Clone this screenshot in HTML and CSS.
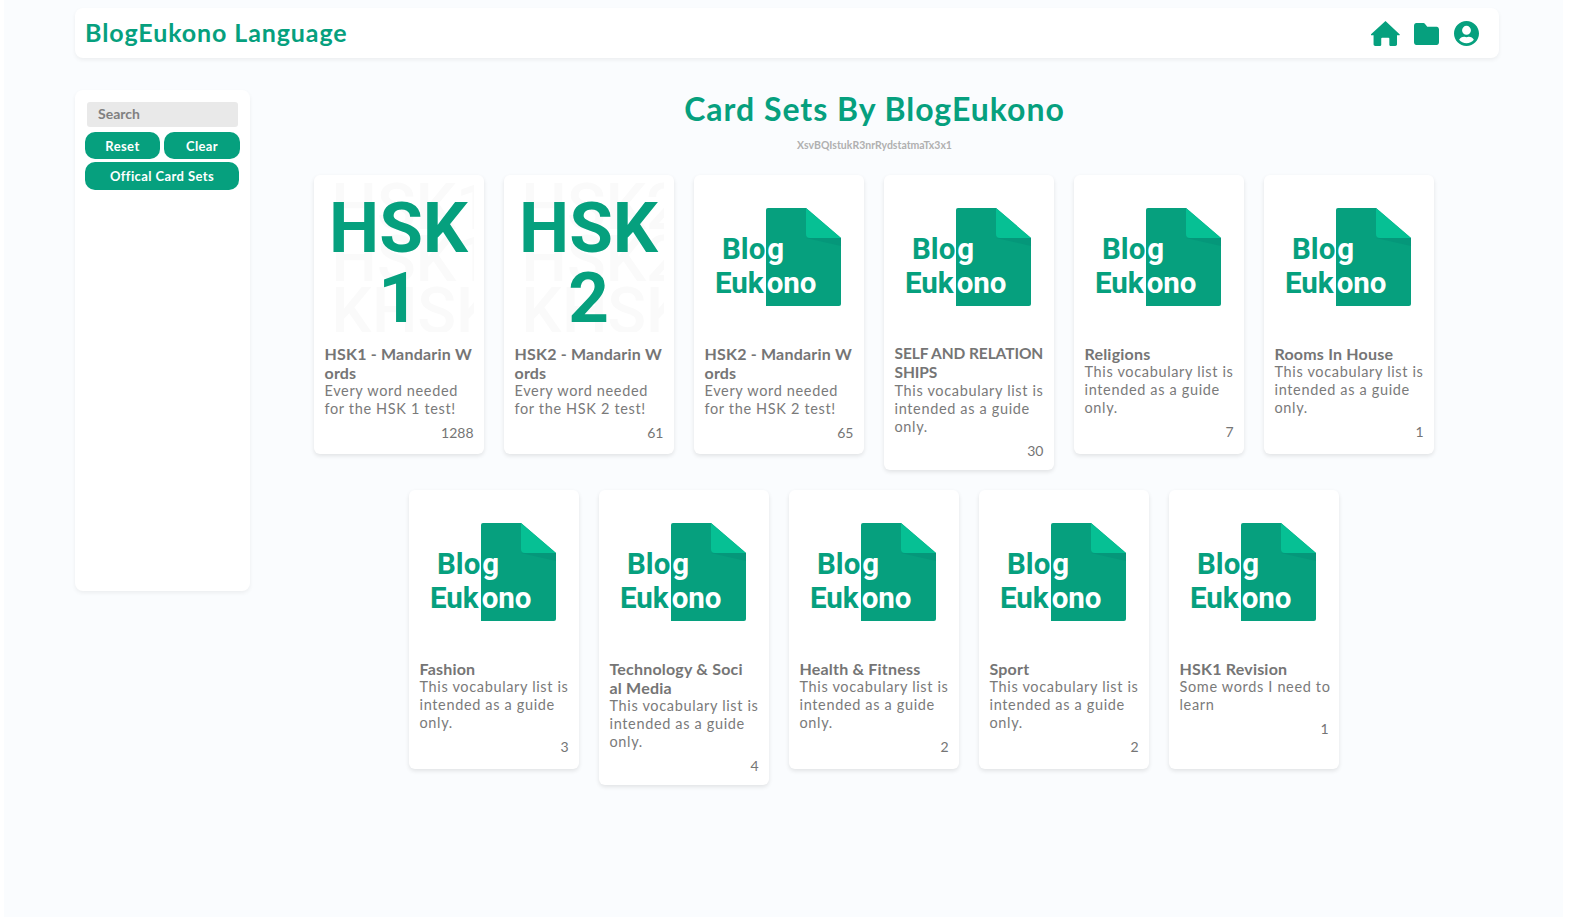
FILE: index.html
```html
<!DOCTYPE html>
<html lang="en">
<head>
<meta charset="utf-8">
<title>BlogEukono Language</title>
<link rel="stylesheet" href="styles.css">
</head>
<body>
<header class="nav">
  <span class="brand">BlogEukono Language</span>
  <div class="nav-icons">
    <svg class="ico ico-home" viewBox="16 32 544 456" preserveAspectRatio="none"><path fill="currentColor" d="M288 32 16 272c-8 8-2 22 9 22h39v162c0 18 14 32 32 32h96c9 0 16-7 16-16V352c0-9 7-16 16-16h120c9 0 16 7 16 16v120c0 9 7 16 16 16h96c18 0 32-14 32-32V294h39c11 0 17-14 9-22z"/></svg>
    <svg class="ico ico-folder" viewBox="0 64 512 384" preserveAspectRatio="none"><path fill="currentColor" d="M464 128H272l-54-54c-6-6-14-10-23-10H48C21 64 0 85 0 112v288c0 27 21 48 48 48h416c27 0 48-21 48-48V176c0-27-21-48-48-48z"/></svg>
    <svg class="ico ico-user" viewBox="0 8 496 496"><path fill="currentColor" fill-rule="evenodd" d="M248 8C111 8 0 119 0 256s111 248 248 248 248-111 248-248S385 8 248 8zm0 96a88 88 0 1 1 0 176 88 88 0 0 1 0-176zm0 344c-59 0-111-27-146-69 19-36 56-59 98-59 2 0 5 0 7 1 13 4 27 7 41 7s28-3 41-7c2-1 5-1 7-1 42 0 79 23 98 59-35 42-87 69-146 69z"/></svg>
  </div>
</header>
<div class="layout">
  <aside class="side">
    <input class="search" placeholder="Search">
    <div class="btn-row">
      <button class="btn btn-reset">Reset</button>
      <button class="btn btn-clear">Clear</button>
    </div>
    <button class="btn btn-wide">Offical Card Sets</button>
  </aside>
  <main class="main">
    <h1 class="title">Card Sets By BlogEukono</h1>
    <p class="sub">XsvBQIstukR3nrRydstatmaTx3x1</p>
    <div class="cards">
      <article class="card">
        <div class="hsk"><div class="hsk-bg">HSK1<br>HSK1<br>KHSK</div><div class="hsk-fg">HSK<br>1</div></div>
        <h2 class="card-title">HSK1 - Mandarin Words</h2>
        <p class="card-desc">Every word needed for the HSK 1 test!</p>
        <div class="count">1288</div>
      </article>
      <article class="card">
        <div class="hsk"><div class="hsk-bg">HSK2<br>HSK2<br>KHSK</div><div class="hsk-fg">HSK<br>2</div></div>
        <h2 class="card-title">HSK2 - Mandarin Words</h2>
        <p class="card-desc">Every word needed for the HSK 2 test!</p>
        <div class="count">61</div>
      </article>
      <article class="card">
        <svg class="thumb" viewBox="0 0 150 150"><path d="M62 28a2 2 0 0 1 2-2h38l35 30v66a2 2 0 0 1-2 2H62z" fill="#06a07e"/><path d="M102 56h35v8z" fill="#05977a"/><path d="M102 26l35 30h-31a4 4 0 0 1-4-4z" fill="#06c094"/><text class="logo-text" x="18" y="77" fill="#06a07e">Blo<tspan fill="#fff" dx="2">g</tspan></text><text class="logo-text" x="11" y="111" fill="#06a07e">Euk<tspan fill="#fff" dx="3">ono</tspan></text></svg>
        <h2 class="card-title">HSK2 - Mandarin Words</h2>
        <p class="card-desc">Every word needed for the HSK 2 test!</p>
        <div class="count">65</div>
      </article>
      <article class="card">
        <svg class="thumb" viewBox="0 0 150 150"><path d="M62 28a2 2 0 0 1 2-2h38l35 30v66a2 2 0 0 1-2 2H62z" fill="#06a07e"/><path d="M102 56h35v8z" fill="#05977a"/><path d="M102 26l35 30h-31a4 4 0 0 1-4-4z" fill="#06c094"/><text class="logo-text" x="18" y="77" fill="#06a07e">Blo<tspan fill="#fff" dx="2">g</tspan></text><text class="logo-text" x="11" y="111" fill="#06a07e">Euk<tspan fill="#fff" dx="3">ono</tspan></text></svg>
        <h2 class="card-title card-title-caps">SELF AND RELATIONSHIPS</h2>
        <p class="card-desc">This vocabulary list is intended as a guide only.</p>
        <div class="count">30</div>
      </article>
      <article class="card">
        <svg class="thumb" viewBox="0 0 150 150"><path d="M62 28a2 2 0 0 1 2-2h38l35 30v66a2 2 0 0 1-2 2H62z" fill="#06a07e"/><path d="M102 56h35v8z" fill="#05977a"/><path d="M102 26l35 30h-31a4 4 0 0 1-4-4z" fill="#06c094"/><text class="logo-text" x="18" y="77" fill="#06a07e">Blo<tspan fill="#fff" dx="2">g</tspan></text><text class="logo-text" x="11" y="111" fill="#06a07e">Euk<tspan fill="#fff" dx="3">ono</tspan></text></svg>
        <h2 class="card-title">Religions</h2>
        <p class="card-desc">This vocabulary list is intended as a guide only.</p>
        <div class="count">7</div>
      </article>
      <article class="card">
        <svg class="thumb" viewBox="0 0 150 150"><path d="M62 28a2 2 0 0 1 2-2h38l35 30v66a2 2 0 0 1-2 2H62z" fill="#06a07e"/><path d="M102 56h35v8z" fill="#05977a"/><path d="M102 26l35 30h-31a4 4 0 0 1-4-4z" fill="#06c094"/><text class="logo-text" x="18" y="77" fill="#06a07e">Blo<tspan fill="#fff" dx="2">g</tspan></text><text class="logo-text" x="11" y="111" fill="#06a07e">Euk<tspan fill="#fff" dx="3">ono</tspan></text></svg>
        <h2 class="card-title">Rooms In House</h2>
        <p class="card-desc">This vocabulary list is intended as a guide only.</p>
        <div class="count">1</div>
      </article>
      <article class="card">
        <svg class="thumb" viewBox="0 0 150 150"><path d="M62 28a2 2 0 0 1 2-2h38l35 30v66a2 2 0 0 1-2 2H62z" fill="#06a07e"/><path d="M102 56h35v8z" fill="#05977a"/><path d="M102 26l35 30h-31a4 4 0 0 1-4-4z" fill="#06c094"/><text class="logo-text" x="18" y="77" fill="#06a07e">Blo<tspan fill="#fff" dx="2">g</tspan></text><text class="logo-text" x="11" y="111" fill="#06a07e">Euk<tspan fill="#fff" dx="3">ono</tspan></text></svg>
        <h2 class="card-title">Fashion</h2>
        <p class="card-desc">This vocabulary list is intended as a guide only.</p>
        <div class="count">3</div>
      </article>
      <article class="card">
        <svg class="thumb" viewBox="0 0 150 150"><path d="M62 28a2 2 0 0 1 2-2h38l35 30v66a2 2 0 0 1-2 2H62z" fill="#06a07e"/><path d="M102 56h35v8z" fill="#05977a"/><path d="M102 26l35 30h-31a4 4 0 0 1-4-4z" fill="#06c094"/><text class="logo-text" x="18" y="77" fill="#06a07e">Blo<tspan fill="#fff" dx="2">g</tspan></text><text class="logo-text" x="11" y="111" fill="#06a07e">Euk<tspan fill="#fff" dx="3">ono</tspan></text></svg>
        <h2 class="card-title card-title-tight">Technology &amp; Social Media</h2>
        <p class="card-desc">This vocabulary list is intended as a guide only.</p>
        <div class="count">4</div>
      </article>
      <article class="card">
        <svg class="thumb" viewBox="0 0 150 150"><path d="M62 28a2 2 0 0 1 2-2h38l35 30v66a2 2 0 0 1-2 2H62z" fill="#06a07e"/><path d="M102 56h35v8z" fill="#05977a"/><path d="M102 26l35 30h-31a4 4 0 0 1-4-4z" fill="#06c094"/><text class="logo-text" x="18" y="77" fill="#06a07e">Blo<tspan fill="#fff" dx="2">g</tspan></text><text class="logo-text" x="11" y="111" fill="#06a07e">Euk<tspan fill="#fff" dx="3">ono</tspan></text></svg>
        <h2 class="card-title">Health &amp; Fitness</h2>
        <p class="card-desc">This vocabulary list is intended as a guide only.</p>
        <div class="count">2</div>
      </article>
      <article class="card">
        <svg class="thumb" viewBox="0 0 150 150"><path d="M62 28a2 2 0 0 1 2-2h38l35 30v66a2 2 0 0 1-2 2H62z" fill="#06a07e"/><path d="M102 56h35v8z" fill="#05977a"/><path d="M102 26l35 30h-31a4 4 0 0 1-4-4z" fill="#06c094"/><text class="logo-text" x="18" y="77" fill="#06a07e">Blo<tspan fill="#fff" dx="2">g</tspan></text><text class="logo-text" x="11" y="111" fill="#06a07e">Euk<tspan fill="#fff" dx="3">ono</tspan></text></svg>
        <h2 class="card-title">Sport</h2>
        <p class="card-desc">This vocabulary list is intended as a guide only.</p>
        <div class="count">2</div>
      </article>
      <article class="card">
        <svg class="thumb" viewBox="0 0 150 150"><path d="M62 28a2 2 0 0 1 2-2h38l35 30v66a2 2 0 0 1-2 2H62z" fill="#06a07e"/><path d="M102 56h35v8z" fill="#05977a"/><path d="M102 26l35 30h-31a4 4 0 0 1-4-4z" fill="#06c094"/><text class="logo-text" x="18" y="77" fill="#06a07e">Blo<tspan fill="#fff" dx="2">g</tspan></text><text class="logo-text" x="11" y="111" fill="#06a07e">Euk<tspan fill="#fff" dx="3">ono</tspan></text></svg>
        <h2 class="card-title">HSK1 Revision</h2>
        <p class="card-desc">Some words I need to learn</p>
        <div class="count">1</div>
      </article>
    </div>
  </main>
</div>
</body>
</html>
```
FILE: styles.css
```css
* { box-sizing: border-box; }
html { height: 100%; background: #fff; }
body {
  height: calc(100% - 5px);
  margin: 0 14px 5px 4px;
  padding: 8px 64px 0 71px;
  background: #fafcfe;
  font-family: "Lato", "Liberation Sans", sans-serif;
  color: #757575;
  overflow: hidden;
}
.logo-text { font: 700 29.5px "Roboto", sans-serif; }
.nav {
  height: 50px;
  background: #fff;
  border-radius: 8px;
  box-shadow: 0 2px 4px rgba(0,0,0,.06);
  display: flex;
  align-items: center;
  justify-content: space-between;
  padding: 0 20px 0 10px;
}
.brand { margin-top: -2px; font-size: 25px; font-weight: 700; color: #06a07e; letter-spacing: .9px; }
.nav-icons { display: flex; align-items: center; gap: 15px; margin-top: 1px; color: #06a07e; }
.ico { display: block; }
.ico-home { width: 29px; height: 25px; margin-right: -1px; }
.ico-folder { width: 25px; height: 22px; }
.ico-user { width: 25px; height: 25px; }
.layout { display: flex; margin-top: 32px; }
.side {
  flex: 0 0 175px;
  height: 501px;
  background: #fff;
  border-radius: 8px;
  box-shadow: 0 2px 4px rgba(0,0,0,.06);
  padding: 12px 10px;
  display: flex;
  flex-direction: column;
  align-items: flex-start;
}
.search {
  width: 151px;
  height: 25px;
  margin-left: 2px;
  border: 0;
  border-radius: 3px;
  background: #e9e9e9;
  padding: 0 11px 2px;
  font: 700 14px "Lato", sans-serif;
  color: #777;
}
.search::placeholder { color: #808080; opacity: 1; }
.btn-row { display: flex; gap: 4px; margin-top: 5px; }
.btn {
  height: 27px;
  border: 0;
  border-radius: 10px;
  background: #06a07e;
  color: #fff;
  font: 700 13px "Lato", sans-serif;
  letter-spacing: .4px;
  padding: 0;
}
.btn-reset { width: 75px; }
.btn-clear { width: 76px; }
.btn-wide { width: 154px; margin-top: 3px; height: 28px; }
.main { flex: 1; min-width: 0; display: flex; flex-direction: column; align-items: center; }
.title { margin: -1px 0 0; font-size: 32px; line-height: 40px; font-weight: 700; color: #06a07e; letter-spacing: .97px; }
.sub { margin: 9px 0 0; font-size: 10.5px; line-height: 14px; font-weight: 700; color: #b0b0b0; }
.cards { display: flex; flex-wrap: wrap; justify-content: center; align-items: flex-start; width: 1140px; margin: 13px 2px 0 0; }
.card {
  width: 170px;
  min-height: 279px;
  margin: 10px;
  padding: 0 10px 10px 11px;
  background: #fff;
  border-radius: 6px;
  box-shadow: 0 2px 4px rgba(0,0,0,.1);
}
.thumb { display: block; width: 150px; height: 150px; margin: 7px 0 0 -1px; }
.hsk { position: relative; width: 150px; height: 150px; margin: 7px 0 0 -1px; overflow: hidden; }
.hsk-bg { position: absolute; inset: 0; padding-left: 8px; font: 500 64px/52px "Roboto", sans-serif; color: #fafafa; white-space: nowrap; }
.hsk-fg { position: relative; padding-top: 11px; text-align: center; font: 700 71px/69.5px "Roboto", sans-serif; color: #06a07e; }
.card-title { margin: 12px 0 0; font-size: 16px; line-height: 19px; font-weight: 700; color: #757575; letter-spacing: .2px; word-break: break-all; }
.card-title-caps { font-size: 15.5px; letter-spacing: -.1px; }
.card-title-tight { padding-right: 8px; }
.card-desc { margin: 0 -3px 0 0; font-size: 14.5px; line-height: 18px; font-weight: 400; color: #7a7a7a; letter-spacing: .65px; }
.count { margin-top: 6px; text-align: right; font-size: 14px; line-height: 18px; color: #757575; }
```
